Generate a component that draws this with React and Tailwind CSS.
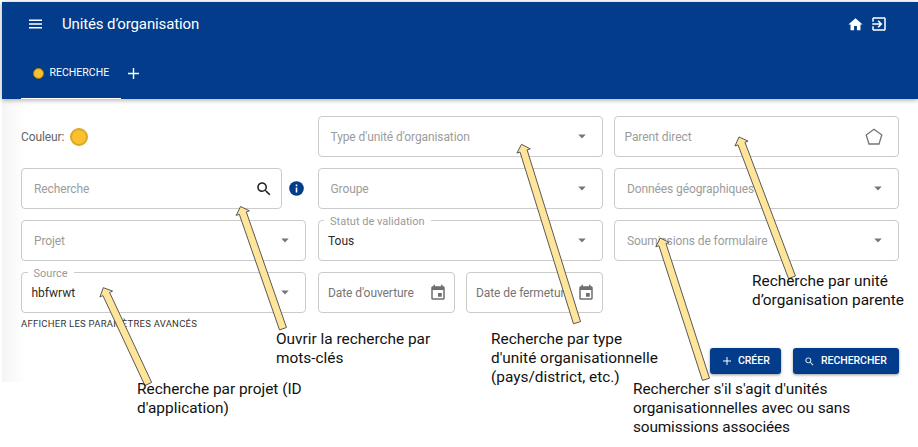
import React from "react";

function Caret() {
  return (
    <svg width="8" height="5" viewBox="0 0 8 5" className="shrink-0">
      <path d="M0.3 0.4h7.4L4 4.4z" fill="#757575" />
    </svg>
  );
}

function SearchIcon({ size }) {
  return (
    <svg width={size} height={size} viewBox="0 0 24 24" fill="currentColor" className="shrink-0">
      <path d="M15.5 14h-.79l-.28-.27C15.41 12.59 16 11.11 16 9.5 16 5.91 13.09 3 9.5 3S3 5.91 3 9.5 5.91 16 9.5 16c1.61 0 3.09-.59 4.23-1.57l.27.28v.79l5 4.99L20.49 19l-4.99-5zm-6 0C7.01 14 5 11.99 5 9.5S7.01 5 9.5 5 14 7.01 14 9.5 11.99 14 9.5 14z" />
    </svg>
  );
}

function CalendarIcon() {
  return (
    <svg width="18" height="18" viewBox="0 0 24 24" fill="#6f6f6f" className="shrink-0">
      <path d="M17 12h-5v5h5v-5zM16 1v2H8V1H6v2H5c-1.11 0-1.99.9-1.99 2L3 19c0 1.1.89 2 2 2h14c1.1 0 2-.9 2-2V5c0-1.1-.9-2-2-2h-1V1h-2zm3 18H5V8h14v11z" />
    </svg>
  );
}

function Box({ className = "", children }) {
  return (
    <div className={"flex h-[41px] items-center justify-between rounded-[4px] border border-[#cbcbcb] " + className}>
      {children}
    </div>
  );
}

function Select({ label, value }) {
  if (value) {
    return (
      <Box className="relative pr-4 pl-[9.5px]">
        <span className="absolute -top-[6px] left-[5.5px] bg-white px-[6px] text-[11px] leading-[14px] tracking-[0.02px] text-[#9a9a9a]">{label}</span>
        <span className="pt-px text-[12px] text-[#2b2b2b]">{value}</span>
        <Caret />
      </Box>
    );
  }
  return (
    <Box className="pr-4 pl-[12px]">
      <span className="pt-px text-[12px] tracking-[-0.1px] text-[#9c9c9c]">{label}</span>
      <Caret />
    </Box>
  );
}

function DateField({ label }) {
  return (
    <Box className="w-[137px] pr-[6.5px] pl-[9.5px]">
      <span className="pt-px text-[12px] tracking-[-0.08px] whitespace-nowrap text-[#757575]">{label}</span>
      <CalendarIcon />
    </Box>
  );
}

const ARROWS = [
  [240.5, 206.5, 283, 328.7],
  [521.5, 144.3, 577, 322.7],
  [739, 137, 792, 277.3],
  [660.3, 238, 706, 379.3],
  [103.3, 287.7, 148.3, 384],
];

function arrowPoints([x1, y1, x2, y2]) {
  const len = Math.hypot(x2 - x1, y2 - y1);
  const ux = (x2 - x1) / len;
  const uy = (y2 - y1) / len;
  const at = (along, side) => `${x1 + ux * along - uy * side},${y1 + uy * along + ux * side}`;
  return [at(0, 0), at(7, 7), at(7, 3.7), at(len, 3.7), at(len, -3.7), at(7, -3.7), at(7, -7)].join(" ");
}

function Note({ className, children }) {
  return <div className={"absolute leading-[19px] whitespace-nowrap text-[#111] " + className}>{children}</div>;
}

export default function App() {
  return (
    <div className="relative h-[447px] w-[918px] overflow-hidden bg-white pt-[2px] pl-[2px] font-['Roboto',sans-serif]">
      <header className="relative flex h-[97px] flex-col justify-between bg-[#023c8b] text-white shadow-[0_1px_5px_rgba(0,0,0,0.35)]">
        <div className="flex h-11 items-center pr-[30px] pl-[27px]">
          <svg width="13" height="10" viewBox="0 0 13 10" fill="white">
            <path d="M0 0.5h13v1.4H0zM0 4.3h13v1.4H0zM0 8.1h13v1.4H0z" />
          </svg>
          <h1 className="ml-5 grow text-[15px] leading-none tracking-[-0.13px]">Unités d’organisation</h1>
          <svg width="17" height="17" viewBox="0 0 24 24" fill="white" className="mr-[6px]">
            <path d="M10 20v-6h4v6h5v-8h3L12 3 2 12h3v8z" />
          </svg>
          <svg width="18" height="18" viewBox="0 0 24 24" fill="white">
            <path d="M10.09 15.59 11.5 17l5-5-5-5-1.41 1.41L12.67 11H3v2h9.67l-2.58 2.59zM19 3H5c-1.11 0-2 .9-2 2v4h2V5h14v14H5v-4H3v4c0 1.1.89 2 2 2h14c1.1 0 2-.9 2-2V5c0-1.1-.9-2-2-2z" />
          </svg>
        </div>
        <div className="flex h-[51px] pl-[19px]">
          <div className="flex w-[100px] items-center border-b border-white pl-3">
            <span className="size-[11px] shrink-0 rounded-full border border-[#a37a20] bg-[#fbc02d]" />
            <span className="ml-[5.5px] text-[10.5px] tracking-[0.02px]">RECHERCHE</span>
          </div>
          <div className="flex items-center pb-px pl-[7px]">
            <svg width="11" height="11" viewBox="0 0 11 11" fill="white">
              <path d="M4.8 0h1.4v4.8H11v1.4H6.2V11H4.8V6.2H0V4.8h4.8z" />
            </svg>
          </div>
        </div>
      </header>

      <main className="h-[283px] bg-linear-to-r from-[#f5f5f5] to-white to-[24px] pt-[17px] pr-[19px] pl-[19px]">
        <div className="grid grid-cols-3 gap-x-[11.5px]">
          <div className="flex flex-col gap-[11px]">
            <div className="flex h-[41px] items-center">
              <span className="w-[44px] pt-px text-[12px] tracking-[-0.1px] text-[#666]">Couleur:</span>
              <span className="ml-[5px] size-[18px] rounded-full border-2 border-[#dba826] bg-[#fbc02d]" />
            </div>
            <div className="flex items-center">
              <Box className="w-[261px] pr-[8.5px] pl-[12px]">
                <span className="pt-px text-[12px] tracking-[-0.1px] text-[#9c9c9c]">Recherche</span>
                <span className="flex text-[#222]"><SearchIcon size={18} /></span>
              </Box>
              <svg width="15" height="15" viewBox="0 0 15 15" className="ml-[7px]">
                <circle cx="7.5" cy="7.5" r="7.3" fill="#023c8b" />
                <path d="M6.7 3.6h1.6v1.6H6.7zM6.7 6.6h1.6v4.8H6.7z" fill="white" />
              </svg>
            </div>
            <Select label="Projet" />
            <Select label="Source" value="hbfwrwt" />
          </div>
          <div className="flex flex-col gap-[11px]">
            <Select label="Type d'unité d'organisation" />
            <Select label="Groupe" />
            <Select label="Statut de validation" value="Tous" />
            <div className="flex justify-between">
              <DateField label="Date d'ouverture" />
              <DateField label="Date de fermeture" />
            </div>
          </div>
          <div className="flex flex-col gap-[11px]">
            <Box className="pr-[15px] pl-[9.5px]">
              <span className="pt-px text-[12px] tracking-[-0.08px] text-[#9c9c9c]">Parent direct</span>
              <svg width="18" height="18" viewBox="0 0 18 18" fill="none" stroke="#757575" strokeWidth="1.3">
                <path d="M9 1.2 16.8 6.9 14 16H4L1.2 6.9z" />
              </svg>
            </Box>
            <Select label="Données géographiques" />
            <Select label="Soumissions de formulaire" />
          </div>
        </div>
        <div className="mt-1 text-[9.5px] leading-[14px] tracking-[0.25px] text-[#333]">AFFICHER LES PARAMÈTRES AVANCÉS</div>
        <div className="mt-[17px] flex justify-end gap-3 text-[10.5px] font-medium tracking-[-0.05px] text-white">
          <button className="flex h-[26px] w-[71px] items-center rounded-[3px] bg-[#023c8b] pl-[13px] shadow-[0_1px_3px_rgba(0,0,0,0.4)]">
            <svg width="8" height="8" viewBox="0 0 8 8" fill="white">
              <path d="M3.5 0h1v3.5H8v1H4.5V8h-1V4.5H0v-1h3.5z" />
            </svg>
            <span className="ml-[7px]">CRÉER</span>
          </button>
          <button className="flex h-[26px] w-[106px] items-center rounded-[3px] bg-[#023c8b] pl-[11px] shadow-[0_1px_3px_rgba(0,0,0,0.4)]">
            <SearchIcon size={11} />
            <span className="ml-[6px]">RECHERCHER</span>
          </button>
        </div>
      </main>

      <svg width="918" height="447" className="pointer-events-none absolute top-0 left-0">
        {ARROWS.map((a) => (
          <polygon key={a[0]} points={arrowPoints(a)} fill="#ffe599" stroke="#595959" strokeWidth="1" />
        ))}
      </svg>

      <Note className="top-[330px] left-[276px] text-[15.4px]">
        <div>Ouvrir la recherche par</div>
        <div>mots-clés</div>
      </Note>
      <Note className="top-[380px] left-[137px] text-[15.4px]">
        <div>Recherche par projet (ID</div>
        <div>d'application)</div>
      </Note>
      <Note className="top-[330px] left-[491px] text-[15.4px]">
        <div>Recherche par type</div>
        <div>d'unité organisationnelle</div>
        <div>(pays/district, etc.)</div>
      </Note>
      <Note className="top-[272px] left-[752px] text-[15.4px]">
        <div>Recherche par unité</div>
        <div>d’organisation parente</div>
      </Note>
      <Note className="top-[380px] left-[633px] text-[15.4px] tracking-[-0.06px]">
        <div>Rechercher s'il s'agit d'unités</div>
        <div>organisationnelles avec ou sans</div>
        <div className="tracking-[-0.16px]">soumissions associées</div>
      </Note>
    </div>
  );
}
